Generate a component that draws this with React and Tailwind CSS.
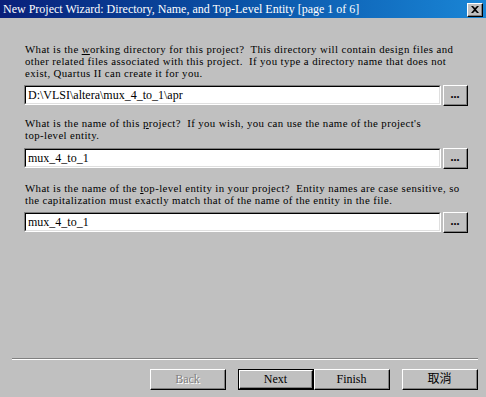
import React from "react";

const serif = { fontFamily: '"Liberation Serif", "Times New Roman", "Noto Sans CJK TC", serif' };

function Btn({ children, className = "", disabled, isDefault }) {
  const inner = (
    <div className="h-full w-full border-t border-l border-t-white border-l-white border-r border-b border-r-black border-b-black">
      <div className="h-full w-full border-r border-b border-r-[#808080] border-b-[#808080] flex items-center justify-center">
        {disabled ? (
          <span className="text-[#808080] [text-shadow:1px_1px_0_#ffffff]">{children}</span>
        ) : (
          <span className="text-black">{children}</span>
        )}
      </div>
    </div>
  );
  return (
    <div className={`h-[21px] w-[76px] text-[12px] ${className}`} style={serif}>
      {isDefault ? <div className="h-full w-full border border-black">{inner}</div> : inner}
    </div>
  );
}

function Field({ value }) {
  return (
    <div className="flex items-start">
      <div className="h-[20px] w-[417px] border-t border-l border-t-[#808080] border-l-[#808080] border-r border-b border-r-white border-b-white">
        <div className="h-full w-full border-t border-l border-t-black border-l-black border-r border-b border-r-[#dfdfdf] border-b-[#dfdfdf] bg-white flex items-center pl-[2px] text-[12px] text-black whitespace-nowrap" style={serif}>
          {value}
        </div>
      </div>
      <div className="ml-[2px] h-[21px] w-[25px] border-t border-l border-t-white border-l-white border-r border-b border-r-black border-b-black">
        <div className="h-full w-full border-r border-b border-r-[#808080] border-b-[#808080] flex items-center justify-center text-[12px] font-bold leading-none text-black pb-[2px]" style={serif}>
          ...
        </div>
      </div>
    </div>
  );
}

function Para({ lines, className = "" }) {
  return (
    <div className={`pl-[25px] text-[10.8px] tracking-[0.4px] leading-[12px] text-black whitespace-pre ${className}`} style={serif}>
      {lines.map((l, i) => (
        <div key={i}>{l}</div>
      ))}
    </div>
  );
}

export default function App() {
  return (
    <div className="w-[486px] h-[397px] bg-[#c0c0c0] flex flex-col overflow-hidden">
      <div className="h-[18px] flex items-center bg-gradient-to-r from-[#0a1f7a] to-[#1a86d6] pl-[3px] pr-[3px]">
        <span className="text-white text-[12px] leading-none whitespace-nowrap" style={serif}>
          New Project Wizard: Directory, Name, and Top-Level Entity [page 1 of 6]
        </span>
        <div className="ml-auto mt-[1px] h-[14px] w-[16px] border-t border-l border-t-white border-l-white border-r border-b border-r-black border-b-black bg-[#c0c0c0]">
          <div className="h-full w-full border-r border-b border-r-[#808080] border-b-[#808080] flex items-center justify-center">
            <svg width="8" height="7" viewBox="0 0 8 7">
              <path d="M0 0h2l2 2 2-2h2L5 3.5 8 7H6L4 5 2 7H0l3-3.5z" fill="black" />
            </svg>
          </div>
        </div>
      </div>

      <Para
        className="mt-[25px]"
        lines={[
          <>What is the <u>w</u>orking directory for this project?  This directory will contain design files and</>,
          "other related files associated with this project.  If you type a directory name that does not",
          "exist, Quartus II can create it for you.",
        ]}
      />
      <div className="mt-[6px] pl-[24px]">
        <Field value="D:\VLSI\altera\mux_4_to_1\apr" />
      </div>

      <Para
        className="mt-[11px]"
        lines={[
          <>What is the name of this <u>p</u>roject?  If you wish, you can use the name of the project's</>,
          "top-level entity.",
        ]}
      />
      <div className="mt-[7px] pl-[24px]">
        <Field value="mux_4_to_1" />
      </div>

      <Para
        className="mt-[13px]"
        lines={[
          <>What is the name of the <u>t</u>op-level entity in your project?  Entity names are case sensitive, so</>,
          "the capitalization must exactly match that of the name of the entity in the file.",
        ]}
      />
      <div className="mt-[6px] pl-[24px]">
        <Field value="mux_4_to_1" />
      </div>

      <div className="mt-[125px] ml-[12px] w-[466px] h-[2px] border-t border-t-[#808080] border-b border-b-white" />

      <div className="mt-[9px] flex pl-[150px]">
        <Btn disabled>Back</Btn>
        <Btn className="ml-[12px]" isDefault>Next</Btn>
        <Btn>Finish</Btn>
        <Btn className="ml-[12px]">取消</Btn>
      </div>
    </div>
  );
}
